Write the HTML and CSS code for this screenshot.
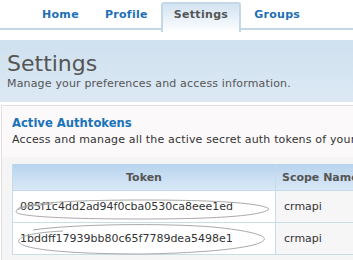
FILE: index.html
```html
<!DOCTYPE html>
<html lang="en">
<head>
    <meta charset="UTF-8">
    <meta name="viewport" content="width=device-width, initial-scale=1.0">
    <title>Settings</title>
    <link rel="stylesheet" href="styles.css">
</head>
<body>
    <ul class="tabs">
        <li><a href="#">Home</a></li>
        <li><a href="#">Profile</a></li>
        <li class="active"><a href="#">Settings</a></li>
        <li><a href="#">Groups</a></li>
    </ul>

    <div class="page-header">
        <h1>Settings</h1>
        <p>Manage your preferences and access information.</p>
    </div>

    <div class="panel">
        <div class="panel-intro">
            <h2>Active Authtokens</h2>
            <p>Access and manage all the active secret auth tokens of your account.</p>
        </div>
        <div class="panel-body">
            <table class="token-table">
                <thead>
                    <tr>
                        <th class="col-token">Token</th>
                        <th class="col-scope">Scope Name</th>
                    </tr>
                </thead>
                <tbody>
                    <tr>
                        <td class="token">
                            085f1c4dd2ad94f0cba0530ca8eee1ed
                            <!-- scribble marks over the token -->
                            <svg class="scribble" width="270" height="30" viewBox="0 0 270 30">
                                <path d="M4 17 C 6 10, 60 7, 130 7 C 200 7, 250 10, 256 16 C 250 23, 200 26, 130 26 C 60 26, 6 24, 3 19 C 2 15, 20 12, 40 11" />
                            </svg>
                        </td>
                        <td class="scope">crmapi</td>
                    </tr>
                    <tr>
                        <td class="token">
                            1bddff17939bb80c65f7789dea5498e1
                            <svg class="scribble second" width="270" height="34" viewBox="0 0 270 34">
                                <path d="M20 8 C 60 2, 150 1, 200 5 C 240 9, 254 14, 251 18 C 246 26, 190 31, 130 32 C 60 32, 10 28, 6 20 C 3 13, 30 10, 50 9" />
                            </svg>
                        </td>
                        <td class="scope">crmapi</td>
                    </tr>
                </tbody>
            </table>
        </div>
    </div>
</body>
</html>
```

FILE: styles.css
```css
body {
    margin: 0;
    font-family: Verdana, "DejaVu Sans", sans-serif;
    font-size: 11px;
    color: #555555;
    background-color: #ffffff;
    overflow: hidden;
}

.tabs {
    display: flex;
    list-style: none;
    margin: 0;
    padding: 2px 0 0 29px;
    height: 26px;
    border-bottom: 2px solid #c3d7e7;
}

.tabs li {
    margin-bottom: -2px;
}

.tabs a {
    display: block;
    padding: 0 11px 5px;
    line-height: 22px;
    font-weight: bold;
    letter-spacing: 0.3px;
    color: #1d6fb6;
    text-decoration: none;
    border: 2px solid transparent;
    border-bottom: none;
}

.tabs .active a {
    color: #555555;
    border-color: #c3d7e7;
    border-radius: 3px 3px 0 0;
    background: linear-gradient(#d2e3f1, #ffffff);
    height: 23px;
}

.page-header {
    margin-top: 10px;
    height: 62px;
    box-sizing: border-box;
    padding: 10px 7px 0;
    background: linear-gradient(#cfe0ee, #dce9f5);
}

.page-header h1 {
    margin: 0;
    font-size: 22px;
    font-weight: normal;
    line-height: 27px;
    color: #555555;
}

.page-header p {
    margin: 0;
    line-height: 13px;
    letter-spacing: 0.17px;
}

.panel {
    margin: 3px 0 0 1px;
    border: 1px solid #e7dce0;
    border-right: none;
    background-color: #fcf9fa;
}

.panel-intro {
    padding: 10px 10px 10px;
}

.panel-intro h2 {
    margin: 0 0 2px;
    font-size: 11.6px;
    line-height: 15px;
    color: #1a73b9;
}

.panel-intro p {
    margin: 0;
    line-height: 14px;
    letter-spacing: 0.17px;
    color: #333333;
    white-space: nowrap;
}

.panel-body {
    background-color: #f6f5f5;
    padding: 7px 0 20px 10px;
}

.token-table {
    border-collapse: collapse;
    width: 420px;
}

.token-table th {
    height: 26px;
    padding: 0;
    font-size: 11px;
    font-weight: bold;
    color: #555555;
    background: linear-gradient(#b7d3ed, #d9e8f6);
    border: 1px solid #c6dbea;
    border-top: none;
}

.col-token {
    width: 262px;
}

.col-scope {
    text-align: left;
    padding-left: 6px !important;
}

.token-table td {
    height: 31px;
    border: 1px solid #c9dcea;
    font-size: 11px;
    color: #333333;
}

.token {
    position: relative;
    background-color: #ffffff;
    padding: 0 0 0 7px;
}

.scope {
    background-color: #f6f6f6;
    padding: 0 8px;
}

.scribble {
    position: absolute;
    left: 0;
    top: 2px;
}

.scribble.second {
    left: 0;
    top: -1px;
}

.scribble path {
    fill: none;
    stroke: #a9a9a9;
    stroke-width: 1;
}
```
